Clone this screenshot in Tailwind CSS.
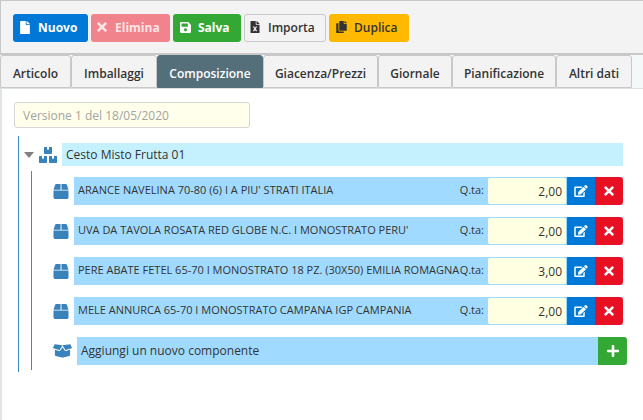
<!DOCTYPE html>
<html lang="it">
    <head>
        <meta charset="UTF-8" />
        <meta name="viewport" content="width=device-width, initial-scale=1.0" />
        <title>Composizione articolo</title>
        <script src="https://cdn.jsdelivr.net/npm/@tailwindcss/browser@4"></script>
    </head>
    <body class="bg-white font-['Open_Sans','Noto_Sans',sans-serif] text-[12px] leading-4 text-[#333]">
        <!-- icone condivise -->
        <svg class="hidden">
            <symbol id="i-file" viewBox="0 0 384 512"><path d="M224 136V0H24C10.7 0 0 10.7 0 24v464c0 13.3 10.7 24 24 24h336c13.3 0 24-10.7 24-24V160H248c-13.2 0-24-10.8-24-24zm160-14.1v6.1H256V0h6.1c6.4 0 12.5 2.5 17 7l97.9 98c4.5 4.5 7 10.6 7 16.9z" /></symbol>
            <symbol id="i-times" viewBox="0 0 352 512"><path d="M242.72 256l100.07-100.07c12.28-12.28 12.28-32.19 0-44.48l-22.24-22.24c-12.28-12.28-32.19-12.28-44.48 0L176 189.28 75.93 89.21c-12.28-12.28-32.19-12.28-44.48 0L9.21 111.45c-12.28 12.28-12.28 32.19 0 44.48L109.28 256 9.21 356.07c-12.28 12.28-12.28 32.19 0 44.48l22.24 22.24c12.28 12.28 32.2 12.28 44.48 0L176 322.72l100.07 100.07c12.28 12.28 32.2 12.28 44.48 0l22.24-22.24c12.28-12.28 12.28-32.19 0-44.48L242.72 256z" /></symbol>
            <symbol id="i-save" viewBox="0 0 448 512"><path d="M433.941 129.941l-83.882-83.882A48 48 0 0 0 316.118 32H48C21.49 32 0 53.49 0 80v352c0 26.51 21.49 48 48 48h352c26.51 0 48-21.49 48-48V163.882a48 48 0 0 0-14.059-33.941zM224 416c-35.346 0-64-28.654-64-64 0-35.346 28.654-64 64-64s64 28.654 64 64c0 35.346-28.654 64-64 64zm96-304.52V212c0 6.627-5.373 12-12 12H76c-6.627 0-12-5.373-12-12V108c0-6.627 5.373-12 12-12h228.52c3.183 0 6.235 1.264 8.485 3.515l3.48 3.48A11.996 11.996 0 0 1 320 111.48z" /></symbol>
            <symbol id="i-excel" viewBox="0 0 384 512"><path d="M224 136V0H24C10.7 0 0 10.7 0 24v464c0 13.3 10.7 24 24 24h336c13.3 0 24-10.7 24-24V160H248c-13.2 0-24-10.8-24-24zm160-14.1v6.1H256V0h6.1c6.4 0 12.5 2.5 17 7l97.9 98c4.5 4.5 7 10.6 7 16.9z" /><path d="M125 235L259 435M259 235L125 435" stroke="#f3f3f3" stroke-width="52" /></symbol>
            <symbol id="i-copy" viewBox="0 0 448 512"><path d="M320 448v40c0 13.255-10.745 24-24 24H24c-13.255 0-24-10.745-24-24V120c0-13.255 10.745-24 24-24h72v296c0 30.879 25.121 56 56 56h168zm0-344V0H152c-13.255 0-24 10.745-24 24v368c0 13.255 10.745 24 24 24h272c13.255 0 24-10.745 24-24V128H344c-13.2 0-24-10.8-24-24zm120.971-31.029L375.029 7.029A24 24 0 0 0 358.059 0H352v96h96v-6.059a24 24 0 0 0-7.029-16.97z" /></symbol>
            <symbol id="i-boxes" viewBox="0 0 576 512"><path d="M560 288h-80v96l-32-21.3-32 21.3v-96h-80c-8.8 0-16 7.2-16 16v192c0 8.8 7.2 16 16 16h224c8.8 0 16-7.2 16-16V304c0-8.8-7.2-16-16-16zm-384-64h224c8.8 0 16-7.2 16-16V16c0-8.8-7.2-16-16-16h-80v96l-32-21.3L256 96V0h-80c-8.8 0-16 7.2-16 16v192c0 8.8 7.2 16 16 16zm64 64h-80v96l-32-21.3L96 384v-96H16c-8.8 0-16 7.2-16 16v192c0 8.8 7.2 16 16 16h224c8.8 0 16-7.2 16-16V304c0-8.8-7.2-16-16-16z" /></symbol>
            <symbol id="i-box" viewBox="0 0 512 512"><path d="M509.5 184.6L458.9 32.8C452.4 13.2 434.1 0 413.4 0H272v192h238.7c-.4-2.5-.4-5-1.2-7.4zM240 0H98.6c-20.7 0-39 13.2-45.5 32.8L2.5 184.6c-.8 2.4-.8 4.9-1.2 7.4H240V0zM0 224v240c0 26.5 21.5 48 48 48h416c26.5 0 48-21.5 48-48V224H0z" /></symbol>
            <symbol id="i-box-open" viewBox="0 0 640 512"><path d="M425.7 256c-16.9 0-32.8-9-41.4-23.4L320 126l-64.2 106.6c-8.7 14.5-24.6 23.5-41.5 23.5-4.5 0-9-.6-13.3-1.9L64 215v178c0 14.7 10 27.5 24.2 31l216.2 54.1c10.2 2.5 20.9 2.5 31 0L551.8 424c14.2-3.6 24.2-16.4 24.2-31V215l-137 39.1c-4.3 1.3-8.8 1.9-13.3 1.9zm212.6-112.2L586.8 41c-3.1-6.2-9.8-9.8-16.7-8.9L320 64l91.7 152.1c3.8 6.3 11.4 9.3 18.5 7.3l197.9-56.5c9.9-2.9 14.7-13.9 10.2-23.1zM53.2 41L1.7 143.8c-4.6 9.2.3 20.2 10.1 23l197.9 56.5c7.1 2 14.7-1 18.5-7.3L320 64 69.8 32.1c-6.9-.8-13.5 2.7-16.6 8.9z" /></symbol>
            <symbol id="i-edit" viewBox="0 0 576 512"><path d="M402.6 83.2l90.2 90.2c3.8 3.8 3.8 10 0 13.8L274.4 405.6l-92.8 10.3c-12.4 1.4-22.9-9.1-21.5-21.5l10.3-92.8L388.8 83.2c3.8-3.8 10-3.8 13.8 0zm162-22.9l-48.8-48.8c-15.2-15.2-39.9-15.2-55.2 0l-35.4 35.4c-3.8 3.8-3.8 10 0 13.8l90.2 90.2c3.8 3.8 10 3.8 13.8 0l35.4-35.4c15.2-15.3 15.2-40 0-55.2zM384 346.2V448H64V128h229.8c3.2 0 6.2-1.3 8.5-3.5l40-40c7.6-7.6 2.2-20.5-8.5-20.5H48C21.5 64 0 85.5 0 112v352c0 26.5 21.5 48 48 48h352c26.5 0 48-21.5 48-48V306.2c0-10.7-12.9-16-20.5-8.5l-40 40c-2.2 2.3-3.5 5.3-3.5 8.5z" /></symbol>
            <symbol id="i-plus" viewBox="0 0 448 512"><path d="M416 208H272V64c0-17.7-14.300-32-32-32h-32c-17.700 0-32 14.300-32 32v144H32c-17.700 0-32 14.300-32 32v32c0 17.700 14.300 32 32 32h144v144c0 17.700 14.300 32 32 32h32c17.700 0 32-14.300 32-32V304h144c17.700 0 32-14.300 32-32v-32c0-17.700-14.300-32-32-32z" /></symbol>
        </svg>

        <header class="flex gap-[3px] border-t border-b-2 border-l border-[#c8c8c8] bg-[#f3f3f3] px-3 pt-[13px] pb-[11px] font-semibold">
            <button class="flex h-7 w-[75px] items-center rounded-[3px] bg-[#0078d7] pl-[7px] font-bold text-white">
                <svg class="mr-2 mb-[2px] h-[13px] w-[10px] fill-current"><use href="#i-file" /></svg>Nuovo
            </button>
            <button class="flex h-7 w-[79px] items-center rounded-[3px] bg-[#f0838b] pl-[6px] font-bold text-[#fce4e6]">
                <svg class="mr-2 mb-[2px] h-[14px] w-[10px] fill-current"><use href="#i-times" /></svg>Elimina
            </button>
            <button class="flex h-7 w-[68px] items-center rounded-[3px] bg-[#34a835] pl-[7px] font-bold text-white">
                <svg class="mr-[7px] mb-[2px] h-[13px] w-[11px] fill-current"><use href="#i-save" /></svg>Salva
            </button>
            <button class="flex h-7 w-[82px] items-center rounded-[3px] border border-[#c8c8c8] bg-[#f3f3f3] pl-[5px]">
                <svg class="mr-2 mb-[2px] h-3 w-[10px] fill-current"><use href="#i-excel" /></svg>Importa
            </button>
            <button class="flex h-7 w-[80px] items-center rounded-[3px] bg-[#ffb900] pl-[7px]">
                <svg class="mr-[7px] mb-[2px] h-3 w-[11px] fill-current"><use href="#i-copy" /></svg>Duplica
            </button>
        </header>

        <nav class="flex h-[34px] border-b border-[#dde2e5] bg-[#f4f8f9] font-semibold">
            <button class="w-[71px] rounded-t-[3px] border border-[#c8c8c8] bg-[#f3f3f3] pt-1">Articolo</button>
            <button class="w-[86px] rounded-t-[3px] border border-[#c8c8c8] bg-[#f3f3f3] pt-1">Imballaggi</button>
            <button class="w-[106px] rounded-t-[3px] border border-[#546e7a] bg-[#546e7a] pt-1 text-white">Composizione</button>
            <button class="w-[115px] rounded-t-[3px] border border-[#c8c8c8] bg-[#f3f3f3] pt-1">Giacenza/Prezzi</button>
            <button class="w-[74px] rounded-t-[3px] border border-[#c8c8c8] bg-[#f3f3f3] pt-1">Giornale</button>
            <button class="w-[104px] rounded-t-[3px] border border-[#c8c8c8] bg-[#f3f3f3] pt-1">Pianificazione</button>
            <button class="w-[76px] rounded-t-[3px] border border-[#c8c8c8] bg-[#f3f3f3] pt-1">Altri dati</button>
        </nav>

        <main class="min-h-[calc(100vh-89px)] border-l-2 border-[#dfe4e4] pt-[13px] pr-4 pl-3">
            <input
                class="block h-[26px] w-[236px] rounded-[3px] border border-[#d6d6d6] bg-[#ffffec] px-2 text-[#a3a3a3]"
                type="text"
                aria-label="Versione"
                value="Versione 1 del 18/05/2020"
            />

            <div class="mt-2 ml-1 border-l border-[#3f8ac0] pt-[7px] pb-[2px]">
                <div class="mr-1 flex items-center">
                    <button class="ml-[5px] w-[10px]" aria-label="Comprimi">
                        <svg class="h-[6px] w-[10px] fill-[#808080]" viewBox="0 0 10 6"><path d="M0 0h10L5 6z" /></svg>
                    </button>
                    <svg class="mx-[5px] h-4 w-[18px] fill-[#3883bb]"><use href="#i-boxes" /></svg>
                    <div class="h-[23px] flex-1 bg-[#c5f1ff] px-1 leading-6">Cesto Misto Frutta 01</div>
                </div>

                <div class="mt-[5px] ml-3 border-l border-[#3f8ac0] pt-[6px] pb-[5px]">
                    <ul id="components"></ul>
                    <div class="flex items-center">
                        <svg class="mr-[5px] ml-[21px] h-4 w-[19px] fill-[#3883bb]"><use href="#i-box-open" /></svg>
                        <div class="flex h-7 flex-1 items-center bg-[#a0dbff] pl-1">Aggiungi un nuovo componente</div>
                        <button class="flex h-7 w-[29px] items-center justify-center rounded-r-[3px] bg-[#34a835]" aria-label="Aggiungi">
                            <svg class="h-[14px] w-3 fill-white"><use href="#i-plus" /></svg>
                        </button>
                    </div>
                </div>
            </div>
        </main>

        <script>
            const components = [
                { name: "ARANCE NAVELINA 70-80 (6) I A PIU' STRATI ITALIA", qty: "2,00" },
                { name: "UVA DA TAVOLA ROSATA RED GLOBE N.C. I MONOSTRATO PERU'", qty: "2,00" },
                { name: "PERE ABATE FETEL 65-70 I MONOSTRATO 18 PZ. (30X50) EMILIA ROMAGNA", qty: "3,00" },
                { name: "MELE ANNURCA 65-70 I MONOSTRATO CAMPANA IGP CAMPANIA", qty: "2,00" },
            ];

            document.querySelector("#components").innerHTML = components
                .map(
                    (c, i) => `
                <li class="mr-1 mb-3 flex items-center">
                    <svg class="mr-[5px] ml-[21px] h-[15px] w-4 fill-[#3883bb]"><use href="#i-box" /></svg>
                    <div class="flex h-7 min-w-0 flex-1 bg-[#a0dbff] pl-1 text-[11px]">
                        <span class="min-w-0 flex-1 whitespace-nowrap leading-[26px]">${c.name}</span>
                        <label class="mr-1 leading-[26px]" for="qty-${i}">Q.ta:</label>
                        <input class="my-px mr-px w-[78px] rounded-[2px] bg-[#ffffe1] px-1 pt-[2px] text-right text-[12px]" type="text" id="qty-${i}" value="${c.qty}" />
                    </div>
                    <button class="flex h-7 w-7 items-center justify-center bg-[#0078d7]" aria-label="Modifica">
                        <svg class="h-3 w-[14px] fill-white"><use href="#i-edit" /></svg>
                    </button>
                    <button class="flex h-7 w-7 items-center justify-center rounded-r-[3px] bg-[#e81123]" aria-label="Rimuovi">
                        <svg class="h-[14px] w-[10px] fill-white"><use href="#i-times" /></svg>
                    </button>
                </li>`
                )
                .join("");
        </script>
    </body>
</html>
